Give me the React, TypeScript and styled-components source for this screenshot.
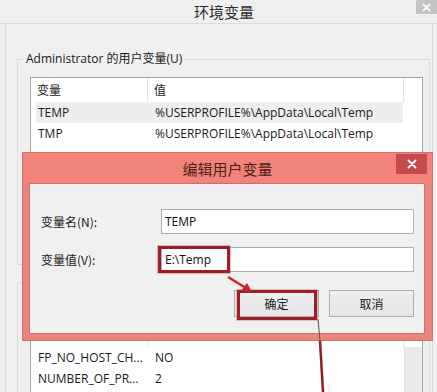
import React from 'react';
import styled, { createGlobalStyle } from 'styled-components';

const GlobalStyle = createGlobalStyle`
  html, body {
    margin: 0;
    padding: 0;
  }
  body {
    background: #f0f0f0;
    font-family: "Open Sans", "Noto Sans CJK SC", sans-serif;
    font-size: 12px;
    color: #1a1a1a;
  }
`;

const Window = styled.div`
  position: relative;
  width: 437px;
  height: 392px;
  overflow: hidden;
  background: #f0f0f0;
  display: flex;
  flex-direction: column;
`;

const TitleBar = styled.div`
  position: relative;
  flex: none;
  height: 23px;
  display: flex;
  align-items: center;
  justify-content: center;
  padding-left: 11px;
  font-family: "Noto Sans CJK SC", sans-serif;
  font-size: 15px;
  color: #2b2b2b;
  border-bottom: 1px solid #dcdcdc;
`;

const CloseBox = styled.div<{ $tone: string; $w: number; $h: number }>`
  position: absolute;
  top: ${(p) => (p.$tone === 'red' ? 1 : 0)}px;
  right: ${(p) => (p.$tone === 'red' ? 5 : 0)}px;
  width: ${(p) => p.$w}px;
  height: ${(p) => p.$h}px;
  display: flex;
  align-items: center;
  justify-content: center;
  background: ${(p) => (p.$tone === 'red' ? '#c8484b' : '#c4c4c4')};
`;

const Client = styled.div`
  flex: 1;
  min-height: 0;
  margin: 0 4px 0 5px;
  border-left: 1px solid #d9d9d9;
  border-right: 1px solid #d9d9d9;
  padding: 27px 2px 0 11px;
  display: flex;
  flex-direction: column;
  gap: 9px;
`;

const GroupBox = styled.fieldset<{ $padTop: number }>`
  margin: 0;
  border: 1px solid #dcdcdc;
  padding: ${(p) => p.$padTop}px 6px 11px 12px;
  min-width: 0;

  legend {
    margin-left: -6px;
    padding: 0 2px;
    line-height: 16px;
    color: #1a1a1a;
  }
`;

const List = styled.div<{ $height: number }>`
  width: 391px;
  height: ${(p) => p.$height}px;
  flex: none;
  border: 1px solid #a3a3a3;
  background: #fff;
  display: flex;
  flex-direction: column;
`;

const Header = styled.div`
  display: flex;
  height: 24px;
  flex: none;
`;

const HeadCell = styled.div<{ $w: number; $pad: number }>`
  width: ${(p) => p.$w}px;
  padding-left: ${(p) => p.$pad}px;
  box-sizing: border-box;
  border-right: 1px solid #e4e4e4;
  display: flex;
  align-items: center;
`;

const Body = styled.div`
  flex: 1;
  display: flex;
  min-height: 0;
`;

const Rows = styled.div`
  flex: 1;
  display: flex;
  flex-direction: column;
  padding-left: 5px;
`;

const Row = styled.div<{ $selected?: boolean }>`
  display: flex;
  align-items: center;
  height: 21px;
  width: 367px;
  flex: none;
  background: ${(p) => (p.$selected ? '#eeeeee' : 'transparent')};
`;

const Cell = styled.div<{ $w?: number }>`
  width: ${(p) => (p.$w ? `${p.$w}px` : 'auto')};
  padding-left: 2px;
  box-sizing: border-box;
  white-space: nowrap;
`;

const ScrollTrack = styled.div`
  width: 17px;
  flex: none;
  background: #ebebeb;
  border-left: 1px solid #e2e2e2;
`;

/* ---- dialog ---- */

const Dialog = styled.div`
  position: absolute;
  left: 22px;
  top: 152px;
  width: 411px;
  height: 189px;
  box-sizing: border-box;
  background: #e9857c;
  border: 1px solid #d47068;
  padding: 0 7px 6px 6px;
  display: flex;
  flex-direction: column;
`;

const DialogTitle = styled.div`
  position: relative;
  height: 30px;
  flex: none;
  margin: 0 -7px 0 -6px;
  background: #f2837a;
  display: flex;
  align-items: center;
  justify-content: center;
  font-family: "Noto Sans CJK SC", sans-serif;
  font-size: 15px;
  color: #4c1d17;
`;

const DialogClient = styled.div`
  flex: 1;
  background: #f0f0f0;
  border: 1px solid #c9716a;
  padding: 25px 10px 0 11px;
  display: flex;
  flex-direction: column;
`;

const FormGrid = styled.div`
  display: grid;
  grid-template-columns: 120px 253px;
  row-gap: 13px;
  align-items: center;
`;

const Label = styled.div`
  font-family: "Noto Sans CJK SC", sans-serif;
  font-size: 12px;
  color: #1a1a1a;
`;

const TextBox = styled.div`
  position: relative;
  height: 25px;
  box-sizing: border-box;
  border: 1px solid #abadb3;
  background: #fff;
  padding-left: 3px;
  display: flex;
  align-items: center;
  font-size: 12px;
  color: #111;
`;

const Mark = styled.span<{ $l: number; $t: number; $w: number; $h: number }>`
  position: absolute;
  left: ${(p) => p.$l}px;
  top: ${(p) => p.$t}px;
  width: ${(p) => p.$w}px;
  height: ${(p) => p.$h}px;
  box-sizing: border-box;
  border: 3px solid #9c1e26;
  box-shadow: 0 0 0 1px rgba(220, 110, 110, 0.45);
  pointer-events: none;
`;

const ButtonRow = styled.div`
  display: flex;
  justify-content: flex-end;
  gap: 10px;
  margin-top: 18px;
`;

const Button = styled.div`
  position: relative;
  width: 85px;
  height: 27px;
  box-sizing: border-box;
  border: 1px solid #adadad;
  background: linear-gradient(#efefef, #e5e5e5);
  display: flex;
  align-items: center;
  justify-content: center;
  font-family: "Noto Sans CJK SC", sans-serif;
  font-size: 12px;
  color: #1a1a1a;
`;

const Overlay = styled.svg`
  position: absolute;
  left: 0;
  top: 0;
  pointer-events: none;
`;

const XIcon = ({ size, stroke }: { size: number; stroke: number }) => (
  <svg width={size} height={size} viewBox="0 0 10 10">
    <path d="M1.5 1.5 L8.5 8.5 M8.5 1.5 L1.5 8.5" stroke="#fff" strokeWidth={stroke} strokeLinecap="round" />
  </svg>
);

const userVars = [
  { name: 'TEMP', value: '%USERPROFILE%\\AppData\\Local\\Temp', selected: true },
  { name: 'TMP', value: '%USERPROFILE%\\AppData\\Local\\Temp' },
];

// the system list is scrolled so that only these rows show under the dialog
const sysVars = [
  { name: 'FP_NO_HOST_CH...', value: 'NO' },
  { name: 'NUMBER_OF_PR...', value: '2' },
];

export default function App() {
  return (
    <Window>
      <GlobalStyle />
      <TitleBar>
        环境变量
        <CloseBox $tone="gray" $w={21} $h={14}>
          <XIcon size={9} stroke={1.8} />
        </CloseBox>
      </TitleBar>

      <Client>
        <GroupBox $padTop={10}>
          <legend>Administrator 的用户变量(U)</legend>
          <List $height={174}>
            <Header>
              <HeadCell $w={117} $pad={6}>变量</HeadCell>
              <HeadCell $w={256} $pad={6}>值</HeadCell>
            </Header>
            <Body>
              <Rows>
                {userVars.map((v) => (
                  <Row key={v.name} $selected={v.selected}>
                    <Cell $w={117}>{v.name}</Cell>
                    <Cell>{v.value}</Cell>
                  </Row>
                ))}
              </Rows>
            </Body>
          </List>
        </GroupBox>

        <GroupBox $padTop={32}>
          <legend>系统变量(S)</legend>
          <List $height={80}>
            <Header>
              <HeadCell $w={117} $pad={6}>变量</HeadCell>
              <HeadCell $w={256} $pad={6}>值</HeadCell>
            </Header>
            <Body>
              <Rows>
                {sysVars.map((v) => (
                  <Row key={v.name}>
                    <Cell $w={117}>{v.name}</Cell>
                    <Cell>{v.value}</Cell>
                  </Row>
                ))}
              </Rows>
              <ScrollTrack />
            </Body>
          </List>
        </GroupBox>
      </Client>

      <Dialog>
        <DialogTitle>
          编辑用户变量
          <CloseBox $tone="red" $w={31} $h={20}>
            <XIcon size={10} stroke={1.8} />
          </CloseBox>
        </DialogTitle>
        <DialogClient>
          <FormGrid>
            <Label>变量名(N):</Label>
            <TextBox>TEMP</TextBox>
            <Label>变量值(V):</Label>
            <TextBox>
              E:\Temp
              <Mark $l={-4} $t={-2} $w={72} $h={27} />
            </TextBox>
          </FormGrid>
          <ButtonRow>
            <Button>
              确定
              <Mark $l={2} $t={-1} $w={80} $h={30} />
            </Button>
            <Button>取消</Button>
          </ButtonRow>
        </DialogClient>
      </Dialog>

      <Overlay width={437} height={392} viewBox="0 0 437 392">
        <line x1="228" y1="277" x2="246" y2="288" stroke="#c9262d" strokeWidth="2.5" />
        <path d="M252 292 L241 291 L247 283 Z" fill="#c9262d" />
        <line x1="318" y1="319" x2="320" y2="341" stroke="#555" strokeWidth="1" />
        <line x1="320" y1="341" x2="323" y2="392" stroke="#8f1d24" strokeWidth="2.5" />
      </Overlay>
    </Window>
  );
}
